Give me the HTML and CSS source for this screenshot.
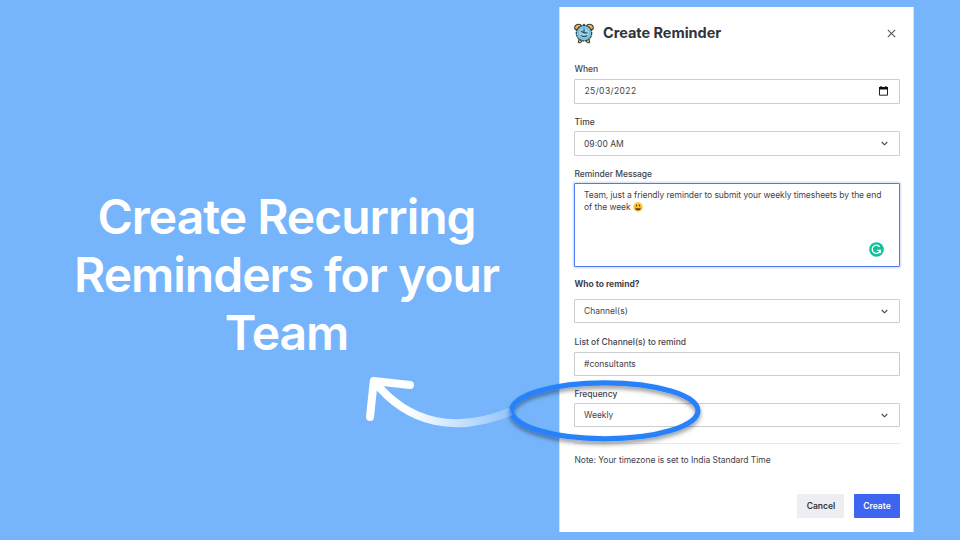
FILE: index.html
```html
<!DOCTYPE html>
<html lang="en">
<head>
<meta charset="utf-8">
<title>Create Reminder</title>
<link rel="stylesheet" href="styles.css">
</head>
<body>
<main class="slide">
  <h1 class="headline">Create Recurring<br>Reminders for your<br>Team</h1>
  <section class="panel">
    <header class="panel-head">
      <svg class="clock" width="21" height="21" viewBox="0 0 21 21">
        <path d="M5.200 15.500 4.200 19.700h2.600l1.300-2.500M14.800 15.500 15.800 19.700h-2.600l-1.300-2.500" fill="#f2b63c" stroke="#3c3d3b" stroke-width="1"/>
        <path d="M1.100 6.300C-.4 3 3 .1 6.600 1.700L7.400 3 2.500 7zM18.900 6.300C20.400 3 17 .1 13.400 1.700L12.600 3l4.900 4z" fill="#e6b84f" stroke="#3f3a30" stroke-width="1.100"/>
        <path d="M8.800 .9h2.400v2H8.800z" fill="#4c5a60"/>
        <circle cx="10" cy="10.200" r="7.700" fill="#8ccdea" stroke="#2f434e" stroke-width="1.300" stroke-dasharray="2.400 .5"/>
        <circle cx="10" cy="10.200" r="5.700" fill="#96d4ef" stroke="#62a9ca" stroke-width=".8"/>
        <path d="M10 5.800v4L7 8.300M10 9.800h3.500M6.800 12.400c1.800 1.400 4.400 1.400 6.400 0" fill="none" stroke="#2f4a59" stroke-width="1.200"/>
      </svg>
      <h2 class="title">Create Reminder</h2>
      <svg class="close" width="9" height="9" viewBox="0 0 9 9"><path d="M.8 .8l7.400 7.400M8.200 .8.800 8.200" fill="none" stroke="#555960" stroke-width="1.100"/></svg>
    </header>

    <div class="group when">
      <div class="label">When</div>
      <div class="field date"><span>25/03/2022</span>
        <svg width="9" height="10" viewBox="0 0 9 10"><path d="M.5 1.600h8v7.600h-8z" fill="none" stroke="#222"/><path d="M0 1h9v2.600H0zM1.400 0h1.200v1.500H1.400zM6.400 0h1.200v1.500H6.400z" fill="#111"/></svg>
      </div>
    </div>
    <div class="group time">
      <div class="label">Time</div>
      <div class="field"><span>09:00 AM</span><svg class="chev" width="7" height="5" viewBox="0 0 7 5"><path d="M.7 1l2.800 2.800L6.300 1"/></svg></div>
    </div>
    <div class="group message">
      <div class="label">Reminder Message</div>
      <div class="textarea">Team, just a friendly reminder to submit your weekly timesheets by the end<br>of the week
        <svg class="smile" width="10" height="10" viewBox="0 0 10 10"><circle cx="5" cy="5" r="4.700" fill="#fdc72e"/><ellipse cx="3.500" cy="3.500" rx=".65" ry="1" fill="#5d3b14"/><ellipse cx="6.500" cy="3.500" rx=".65" ry="1" fill="#5d3b14"/><path d="M2 5.400h6C7.800 9.200 2.200 9.200 2 5.400z" fill="#643511"/><path d="M2.400 5.500h5.200v.7H2.400z" fill="#fff"/></svg>
        <svg class="badge" width="15" height="15" viewBox="0 0 15 15"><circle cx="7.500" cy="7.500" r="7.300" fill="#10c39a"/><path d="M10.600 4.800A4.100 4.100 0 1 0 11.300 8.400H8.200M11.300 8.200V11" fill="none" stroke="#fff" stroke-width="1.350"/></svg>
      </div>
    </div>
    <div class="group who">
      <div class="label">Who to remind?</div>
      <div class="field"><span>Channel(s)</span><svg class="chev" width="7" height="5" viewBox="0 0 7 5"><path d="M.7 1l2.800 2.800L6.300 1"/></svg></div>
    </div>
    <div class="group list">
      <div class="label">List of Channel(s) to remind</div>
      <div class="field"><span>#consultants</span></div>
    </div>
    <div class="group frequency">
      <div class="label">Frequency</div>
      <div class="field"><span>Weekly</span><svg class="chev" width="7" height="5" viewBox="0 0 7 5"><path d="M.7 1l2.800 2.800L6.300 1"/></svg></div>
    </div>
    <p class="note">Note: Your timezone is set to India Standard Time</p>
    <footer class="actions">
      <button class="btn cancel">Cancel</button>
      <button class="btn create">Create</button>
    </footer>
  </section>
  <svg class="callout" width="960" height="540" viewBox="0 0 960 540">
    <defs>
      <linearGradient id="fade" gradientUnits="userSpaceOnUse" x1="408" y1="0" x2="513" y2="0">
        <stop offset="0" stop-color="#fff"/><stop offset="1" stop-color="#fff" stop-opacity=".18"/>
      </linearGradient>
      <filter id="shadow" x="-10%" y="-20%" width="120%" height="150%"><feDropShadow dx="0" dy="3" stdDeviation="2" flood-color="#000" flood-opacity=".4"/></filter>
    </defs>
    <ellipse cx="604.800" cy="410.800" rx="93.200" ry="28" fill="none" stroke="#2681fb" stroke-width="5.200" filter="url(#shadow)"/>
    <path d="M374 381C408 424 456 434 511 411.500" fill="none" stroke="url(#fade)" stroke-width="8"/>
    <path d="M370 417l3.800-36L410 385" fill="none" stroke="#fff" stroke-width="8" stroke-linecap="round" stroke-linejoin="round"/>
  </svg>
</main>
</body>
</html>
```
FILE: styles.css
```css
* { box-sizing: border-box; }

body {
  margin: 0;
  font-family: Inter, "Liberation Sans", sans-serif;
  color: #3f424c;
}

.slide {
  position: relative;
  width: 960px;
  height: 540px;
  overflow: hidden;
  display: flex;
  align-items: flex-start;
  background: #76b5fc;
}

.headline {
  width: 559px;
  margin: 188px 0 0;
  padding-left: 14px;
  color: #fff;
  font-size: 48px;
  font-weight: 600;
  line-height: 58px;
  letter-spacing: -1px;
  text-align: center;
}

.panel {
  width: 355px;
  height: 525px;
  margin-top: 7px;
  padding: 0 13px 0 14px;
  border: solid #cfe5fe;
  border-width: 0 1px;
  background: #fff;
  font-size: 8.5px;
}

.panel-head {
  display: flex;
  align-items: center;
  height: 52px;
}

.title {
  flex: 1;
  margin: 0 0 0 8px;
  color: #2f343d;
  font-size: 14.5px;
  font-weight: 700;
  line-height: 20px;
  letter-spacing: -0.03px;
}

.close { margin-right: 4px; }

.group { display: flex; flex-direction: column; }

.label {
  height: 12px;
  padding-left: 0.5px;
  line-height: 12px;
  font-size: 8.5px;
  font-weight: 500;
  letter-spacing: -0.03px;
  white-space: nowrap;
}

.field {
  display: flex;
  align-items: center;
  justify-content: space-between;
  height: 24px;
  margin-top: 4px;
  padding: 0 11px 0 9px;
  border: 1px solid #cbced1;
  border-radius: 1px;
  white-space: nowrap;
}

.when { margin-top: 4px; }
.when .field, .time .field { height: 25px; }
.time { margin-top: 12px; }
.time .field { margin-top: 3px; }
.message { margin-top: 12px; }
.who { margin-top: 11px; }
.who .label { font-weight: 700; }
.who .field { margin-top: 9px; }
.list { margin-top: 13px; }
.frequency { margin-top: 12px; }
.frequency .field { margin-top: 3px; }

.date { padding-left: 9.5px; padding-bottom: 1px; letter-spacing: 0.4px; }

.chev path { fill: none; stroke: #3f444d; stroke-width: 1.1; }

.textarea {
  position: relative;
  height: 84px;
  margin-top: 3px;
  padding: 5px 9px;
  border: 1px solid #5078f0;
  border-radius: 1px;
  box-shadow: 0 0 0 1.5px #dce7fd;
  line-height: 12px;
  letter-spacing: -0.055px;
  white-space: nowrap;
}

.smile { vertical-align: -2px; }

.badge { position: absolute; right: 15.5px; bottom: 9.5px; }

.note {
  margin: 16px 0 0;
  padding: 10px 0 0 0.5px;
  border-top: 1px solid #e9eaec;
  line-height: 12px;
  letter-spacing: -0.04px;
  white-space: nowrap;
}

.actions {
  display: flex;
  justify-content: flex-end;
  gap: 10px;
  margin-top: 28px;
}

.btn {
  width: 46px;
  height: 24px;
  padding: 0;
  border: 0;
  border-radius: 1px;
  font: 600 8.5px Inter, "Liberation Sans", sans-serif;
}

.cancel { width: 47px; padding-left: 1px; background: #edeef1; color: #2f343d; }
.create { background: #3d65f1; color: #fff; }

.callout { position: absolute; left: 0; top: 0; pointer-events: none; }
```
